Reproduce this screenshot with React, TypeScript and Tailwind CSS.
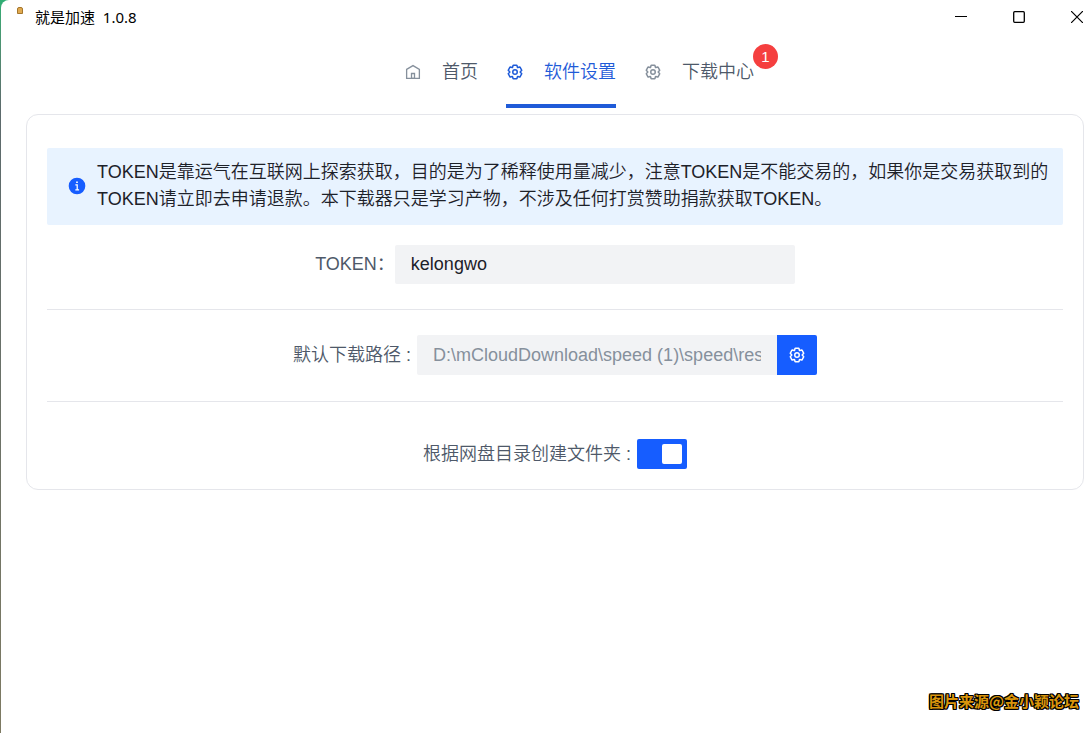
import { useState } from "react";
import type { ReactNode } from "react";

function HomeIcon() {
  return (
    <svg viewBox="0 0 48 48" className="size-[18px] shrink-0" fill="none" stroke="currentColor" strokeWidth="3.5" aria-hidden="true">
      <path d="M7 17 24 7l17 10v24H7V17Z" />
      <path d="M20 28h8v13h-8V28Z" />
    </svg>
  );
}

function SettingsIcon() {
  return (
    <svg viewBox="0 0 48 48" className="size-[18px] shrink-0" fill="none" stroke="currentColor" strokeWidth="4" aria-hidden="true">
      <path d="M18.797 6.732A1 1 0 0 1 19.76 6h8.48a1 1 0 0 1 .964.732l1.285 4.628a1 1 0 0 0 1.213.7l4.651-1.2a1 1 0 0 1 1.116.468l4.24 7.344a1 1 0 0 1-.153 1.2L38.193 23.3a1 1 0 0 0 0 1.402l3.364 3.427a1 1 0 0 1 .153 1.2l-4.24 7.344a1 1 0 0 1-1.116.468l-4.65-1.2a1 1 0 0 0-1.214.7l-1.285 4.628a1 1 0 0 1-.964.732h-8.48a1 1 0 0 1-.963-.732L17.51 36.64a1 1 0 0 0-1.213-.7l-4.65 1.2a1 1 0 0 1-1.116-.468l-4.24-7.344a1 1 0 0 1 .153-1.2L9.809 24.7a1 1 0 0 0 0-1.402l-3.364-3.427a1 1 0 0 1-.153-1.2l4.24-7.344a1 1 0 0 1 1.116-.468l4.65 1.2a1 1 0 0 0 1.213-.7l1.286-4.628Z" />
      <path d="M30 24a6 6 0 1 1-12 0 6 6 0 0 1 12 0Z" />
    </svg>
  );
}

function InfoIcon() {
  return (
    <svg viewBox="0 0 48 48" className="size-5 shrink-0 text-[#165dff]" aria-hidden="true">
      <circle cx="24" cy="24" r="20" fill="currentColor" />
      <path d="M22 13h4v4h-4zM20 20h6v12h3v3h-9v-3h3v-9h-3z" fill="#fff" />
    </svg>
  );
}

function TitleBar() {
  return (
    <header className="flex h-[34px] items-center justify-between pl-4 text-black">
      <div className="flex items-start gap-3">
        <span className="h-[7px] w-[6px] rounded-t-xs border border-[#a5762c] bg-[#e0aa50]" />
        <h1 className="whitespace-pre font-['Noto_Sans','Noto_Sans_CJK_SC',sans-serif] text-[15px] font-normal leading-5">就是加速  1.0.8</h1>
      </div>
      <div className="flex items-center gap-[46px]">
        <button type="button" aria-label="最小化">
          <svg viewBox="0 0 12 12" className="size-3" stroke="currentColor"><path d="M0 5.5h12" /></svg>
        </button>
        <button type="button" aria-label="最大化">
          <svg viewBox="0 0 12 12" className="size-3" stroke="currentColor" strokeWidth="1.3" fill="none"><rect x=".7" y=".7" width="10.6" height="10.6" rx="1" /></svg>
        </button>
        <button type="button" aria-label="关闭" className="pr-[2px]">
          <svg viewBox="0 0 12 12" className="size-3" stroke="currentColor" strokeWidth="1.2"><path d="M0 0l12 12M12 0 0 12" /></svg>
        </button>
      </div>
    </header>
  );
}

type TabProps = { icon: ReactNode; label: string; active?: boolean; badge?: number };

function Tab({ icon, label, active = false, badge }: TabProps) {
  return (
    <a
      href="#"
      aria-current={active ? "page" : undefined}
      className={
        active
          ? "relative flex items-center gap-5 border-b-4 border-[#1f5bd8] pt-[6px] text-[#1f5bd8]"
          : "relative flex items-center gap-5 border-b-4 border-transparent pt-[6px] text-[#4e5969]"
      }
    >
      <span className={active ? "text-[#1f5bd8]" : "text-[#86909c]"}>{icon}</span>
      <span>{label}</span>
      {badge !== undefined && (
        <span className="absolute -right-6 top-[10px] flex size-[25px] items-center justify-center rounded-full bg-[#f53f3f] text-[15px] text-white">
          {badge}
        </span>
      )}
    </a>
  );
}

export default function App() {
  const [token, setToken] = useState("kelongwo");
  const [byFolder, setByFolder] = useState(true);

  return (
    <div className="bg-linear-to-b from-[#2fae74] via-[#5c6a6c] via-15% to-[#7d7a62] pl-px">
      <div className="flex min-h-screen flex-col rounded-tl-lg bg-white font-['Liberation_Sans','Noto_Sans_CJK_SC',sans-serif] text-[18px] font-[350] leading-[27px] text-[#4e5969]">
        <TitleBar />
        <nav className="flex h-[74px] justify-center gap-7 pl-[72px] [&_span>svg]:block">
          <Tab icon={<HomeIcon />} label="首页" />
          <Tab icon={<SettingsIcon />} label="软件设置" active />
          <Tab icon={<SettingsIcon />} label="下载中心" badge={1} />
        </nav>

        <main className="ml-[25px] mr-px mt-[6px] rounded-xl border border-[#e5e6eb] px-5 pb-5 pt-[33px]">
          <div role="alert" className="flex items-center gap-[10px] rounded-xs bg-[#e8f3ff] pb-3 pl-5 pr-3 pt-[11px] text-[#1d2129]">
            <InfoIcon />
            <p>
              TOKEN是靠运气在互联网上探索获取，目的是为了稀释使用量减少，注意TOKEN是不能交易的，如果你是交易获取到的
              TOKEN请立即去申请退款。本下载器只是学习产物，不涉及任何打赏赞助捐款获取TOKEN。
            </p>
          </div>

          <div className="flex items-center justify-center border-b border-[#e5e6eb] pb-[25px] pt-5">
            <label htmlFor="token">TOKEN：</label>
            <input
              id="token"
              value={token}
              onChange={(e) => setToken(e.target.value)}
              className="h-[39px] w-[400px] rounded-xs bg-[#f2f3f5] px-4 text-[#1d2129] outline-none"
            />
          </div>

          <div className="flex items-center justify-center gap-[6px] border-b border-[#e5e6eb] pb-[26px] pt-[25px]">
            <label htmlFor="path">默认下载路径 :</label>
            <div className="flex">
              <input
                id="path"
                disabled
                value="D:\mCloudDownload\speed (1)\speed\resources"
                className="h-10 w-[360px] rounded-l-xs bg-[#f2f3f5] px-4 text-[#86909c] outline-none"
              />
              <button type="button" aria-label="选择下载路径" className="flex size-10 items-center justify-center rounded-r-xs bg-[#165dff] text-white">
                <SettingsIcon />
              </button>
            </div>
          </div>

          <div className="flex items-center justify-center gap-[6px] pt-[37px]">
            <label htmlFor="by-folder">根据网盘目录创建文件夹 :</label>
            <input
              id="by-folder"
              type="checkbox"
              role="switch"
              checked={byFolder}
              onChange={(e) => setByFolder(e.target.checked)}
              className="flex h-[30px] w-[50px] appearance-none items-center rounded-xs bg-[#c9cdd4] px-[5px] before:size-5 before:rounded-xs before:bg-white before:content-[''] checked:justify-end checked:bg-[#165dff]"
            />
          </div>
        </main>

        <footer className="mt-auto flex justify-end pb-5 pr-[6px] font-['Noto_Sans_CJK_SC',sans-serif] text-[15px] font-bold leading-6 text-[#d9950c] [text-shadow:1px_0_0_#000,-1px_0_0_#000,0_1px_0_#000,0_-1px_0_#000,1px_1px_0_#000,-1px_-1px_0_#000,1px_-1px_0_#000,-1px_1px_0_#000]">
          图片来源@金小颖论坛
        </footer>
      </div>
    </div>
  );
}
